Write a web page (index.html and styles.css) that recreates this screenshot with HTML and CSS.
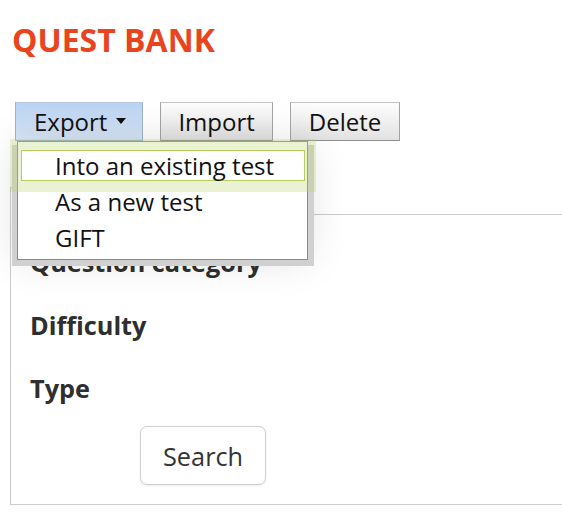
FILE: index.html
```html
<!DOCTYPE html>
<html lang="en">
<head>
<meta charset="utf-8">
<title>Quest Bank</title>
<link rel="stylesheet" href="styles.css">
</head>
<body>
<div class="page">
  <h1 class="title">QUEST BANK</h1>
  <div class="toolbar">
    <div class="dropdown">
      <button class="btn btn-export">Export <span class="caret"></span></button>
      <ul class="menu">
        <li class="menu-item is-hover">Into an existing test</li>
        <li class="menu-item">As a new test</li>
        <li class="menu-item">GIFT</li>
      </ul>
    </div>
    <button class="btn">Import</button>
    <button class="btn btn-delete">Delete</button>
  </div>
  <div class="tabbar">
    <div class="tab"></div>
    <div class="tab-rest"></div>
  </div>
  <div class="panel">
    <div class="field">Question category</div>
    <div class="field">Difficulty</div>
    <div class="field">Type</div>
    <button class="search-btn">Search</button>
  </div>
</div>
</body>
</html>
```
FILE: styles.css
```css
html, body {
  margin: 0;
  padding: 0;
  background: #fff;
}
body {
  font-family: "Open Sans", "Liberation Sans", sans-serif;
  overflow: hidden;
}
.page {
  padding-left: 10px;
  overflow: hidden;
  width: 552px;
}
.title {
  margin: 0;
  padding: 20px 0 0 2px;
  font-size: 32px;
  line-height: 40px;
  font-weight: 700;
  color: #e9441e;
}
.toolbar {
  display: flex;
  gap: 17px;
  margin-top: 42px;
  padding-left: 5px;
  height: 39px;
}
.dropdown {
  position: relative;
}
.btn {
  font-family: "Open Sans", "Liberation Sans", sans-serif;
  font-size: 24px;
  height: 39px;
  line-height: 37px;
  padding: 0 17px;
  margin: 0;
  color: #111;
  border: 1px solid #a4a4a4;
  border-top-color: #c4c4c4;
  border-bottom-color: #8e8e8e;
  border-radius: 0;
  background: linear-gradient(#fdfdfd, #e2e2e2);
  display: flex;
  align-items: center;
}
.btn-delete {
  padding: 0 18px;
}
.btn-export {
  padding: 0 16px 0 18px;
  background: linear-gradient(#bad3f2, #d9e6f6);
  border-color: #9db2cc;
  border-top-color: #b3c6de;
}
.caret {
  display: inline-block;
  width: 0;
  height: 0;
  margin-left: 9px;
  margin-top: -2px;
  border-left: 5.5px solid transparent;
  border-right: 5.5px solid transparent;
  border-top: 6px solid #111;
}
.menu {
  position: absolute;
  z-index: 5;
  top: 39px;
  left: 2px;
  width: 284px;
  margin: 0;
  padding: 8px 2px 6px 3px;
  list-style: none;
  background: #fff;
  border: 1px solid #8a8a8a;
  display: flex;
  flex-direction: column;
  gap: 5px;
  box-shadow: 6px 6px 0 #d0d0d0, -5px 4px 0 #d0d0d0, 6px 4px 0 #d0d0d0, -5px 6px 0 #d0d0d0, 0 0 40px rgba(0, 0, 0, 0.13);
}
.menu-item {
  height: 29px;
  line-height: 29px;
  padding-left: 33px;
  font-size: 24px;
  color: #111;
  border: 1px solid transparent;
  white-space: nowrap;
}
.menu-item.is-hover {
  border-color: #b7cc5e;
  box-shadow: 0 0 0 11px rgba(190, 210, 110, 0.3);
}
.tabbar {
  display: flex;
  margin-top: 46px;
  height: 28px;
  width: 570px;
}
.tab {
  width: 220px;
  border: 1px solid #ccc;
  border-bottom: none;
}
.tab-rest {
  flex: 1;
  border-bottom: 1px solid #ccc;
}
.panel {
  width: 552px;
  border: 1px solid #ccc;
  border-top: none;
  padding: 31px 0 19px 19px;
}
.field {
  font-size: 25.3px;
  font-weight: 700;
  line-height: 33px;
  color: #2f2f2f;
  margin-bottom: 30px;
}
.field:nth-child(3) {
  margin-bottom: 21px;
}
.search-btn {
  display: block;
  margin: 0 0 0 110px;
  font-family: "Open Sans", "Liberation Sans", sans-serif;
  font-size: 25.3px;
  height: 59px;
  padding: 0 22px;
  color: #333;
  background: #fff;
  border: 1px solid #cfcfcf;
  border-radius: 7px;
  box-shadow: 0 1px 2px rgba(0, 0, 0, 0.08);
}
```
